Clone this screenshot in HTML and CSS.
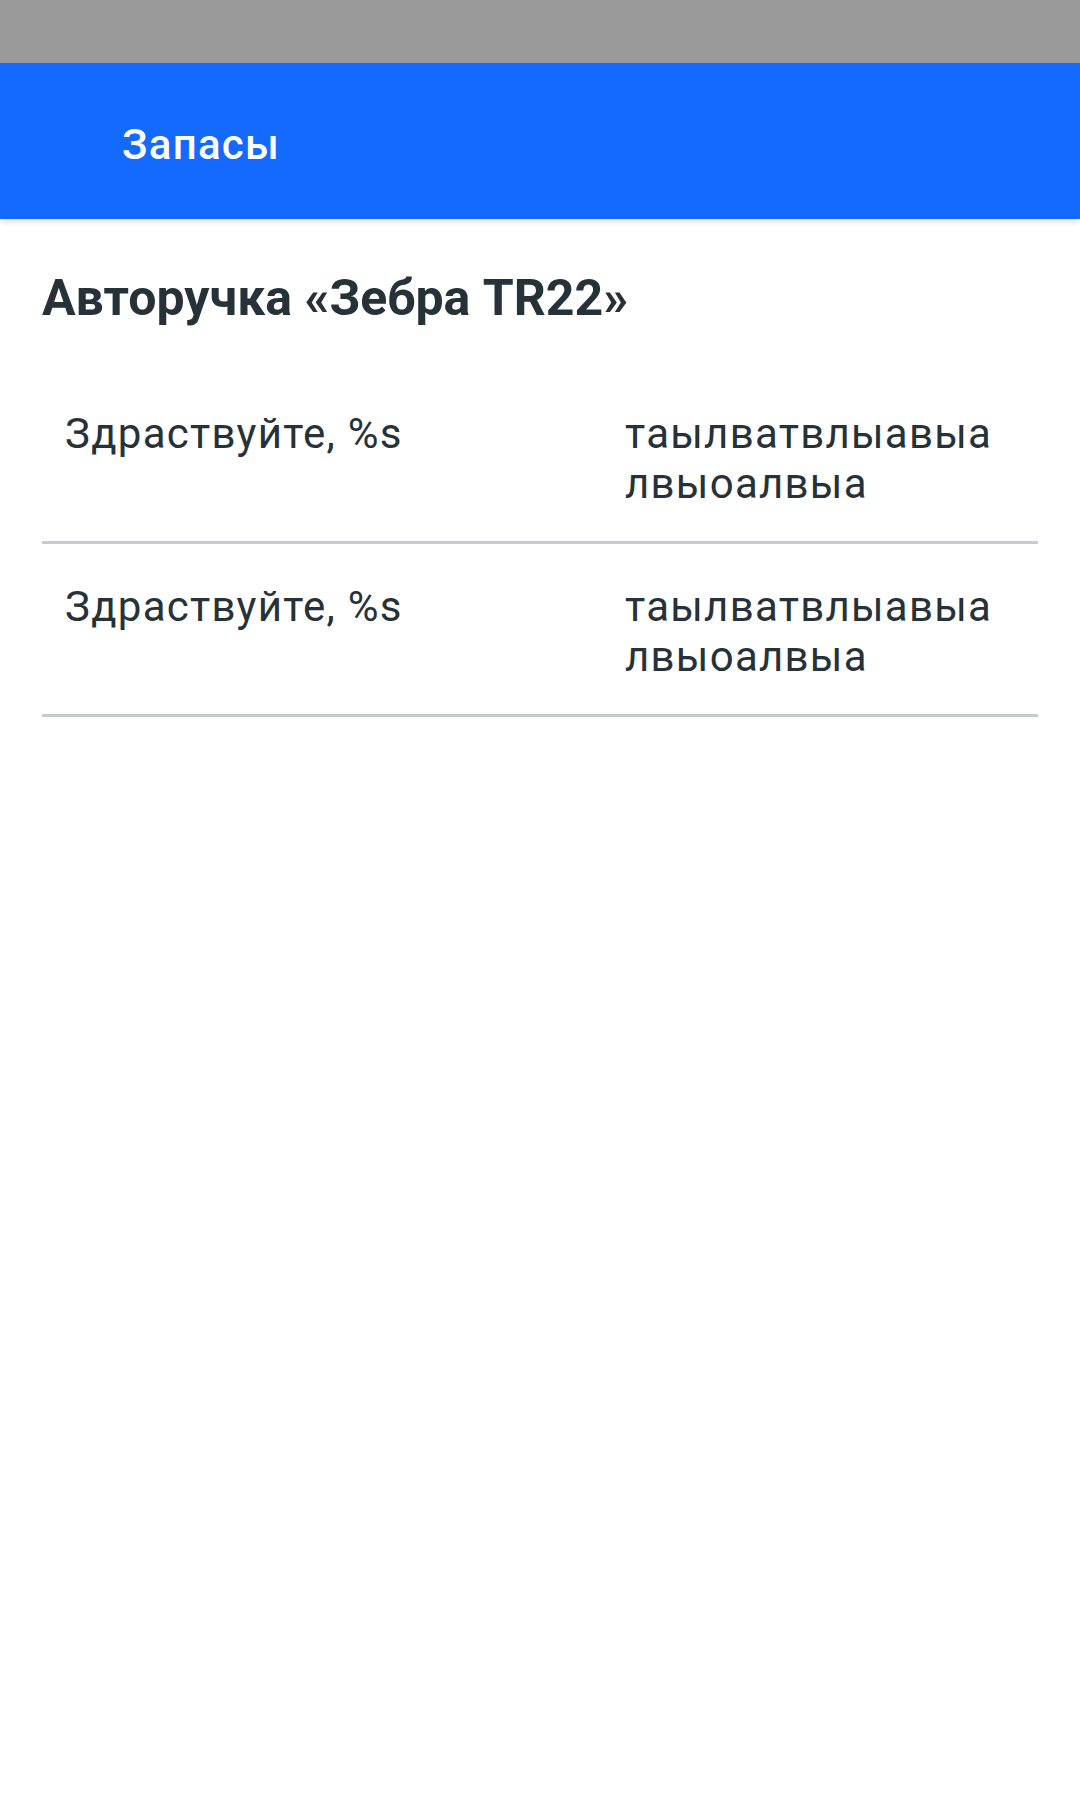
FILE: index.html
```html
<!DOCTYPE html>
<html lang="ru">
<head>
<meta charset="utf-8">
<title>Запасы</title>
<link rel="stylesheet" href="styles.css">
</head>
<body>
<div class="status-bar"></div>
<header class="app-bar">
  <h1 class="app-title">Запасы</h1>
</header>
<main class="content">
  <h2 class="item-title">Авторучка «Зебра TR22»</h2>
  <div class="rows">
    <div class="row">
      <div class="cell-label">Здраствуйте, %s</div>
      <div class="cell-value">таылватвлыавыа лвыоалвыа</div>
    </div>
    <div class="row">
      <div class="cell-label">Здраствуйте, %s</div>
      <div class="cell-value">таылватвлыавыа лвыоалвыа</div>
    </div>
  </div>
</main>
</body>
</html>
```

FILE: styles.css
```css
html, body {
  margin: 0;
  padding: 0;
  background: #ffffff;
  font-family: Roboto, "Noto Sans", sans-serif;
  color: #263238;
}

.status-bar {
  height: 63px;
  background: #9a9a9a;
}

.app-bar {
  height: 156px;
  box-sizing: border-box;
  padding: 7px 0 0 122px;
  background: #1469ff;
  display: flex;
  align-items: center;
  box-shadow: 0 3px 6px rgba(0, 0, 0, 0.12);
  position: relative;
}

.app-title {
  margin: 0;
  color: #ffffff;
  font-size: 42px;
  font-weight: 500;
  letter-spacing: 0.03em;
  line-height: 50px;
}

.content {
  padding: 51px 42px 0;
}

.item-title {
  margin: 0;
  font-size: 50px;
  font-weight: 700;
  line-height: 56px;
  color: #263238;
}

.rows {
  margin-top: 45px;
}

.row {
  display: grid;
  grid-template-columns: 560px 1fr;
  padding: 38px 0 32px 23px;
  border-bottom: 3px solid #c8cad2;
  font-size: 42px;
  line-height: 50px;
  letter-spacing: 0.03em;
}
```
